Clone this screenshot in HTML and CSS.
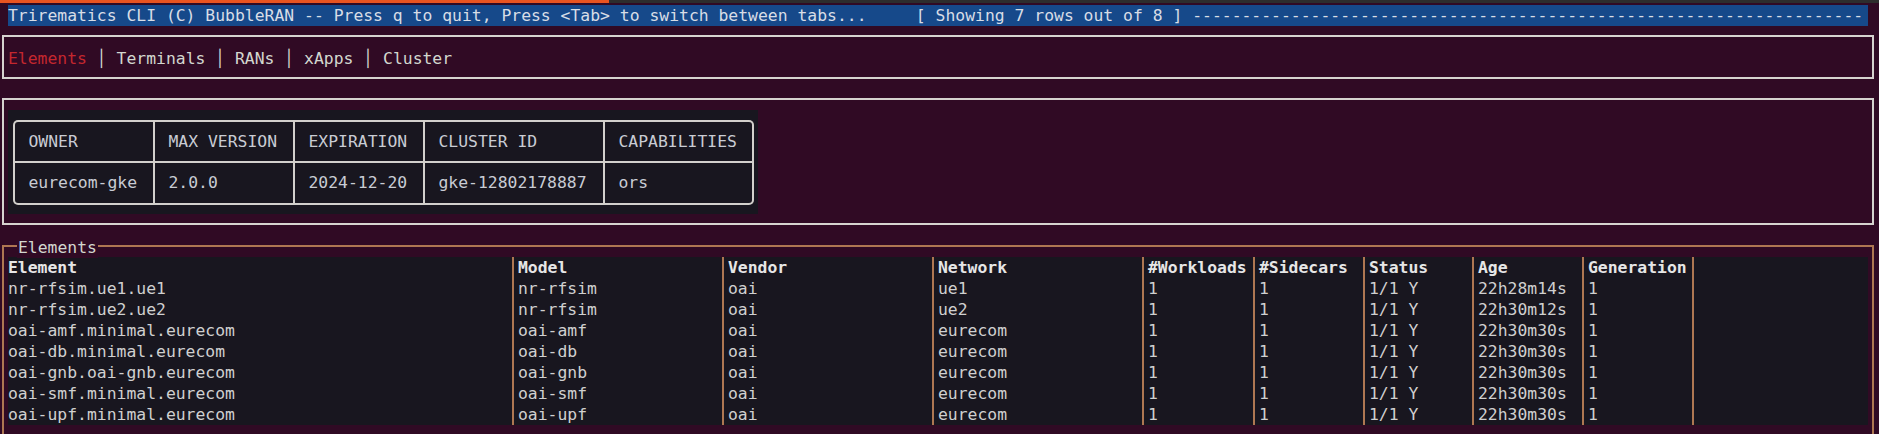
FILE: index.html
```html
<!DOCTYPE html>
<html>
<head>
<meta charset="utf-8">
<link rel="stylesheet" href="styles.css">
</head>
<body>
<div class="screen">
  <div class="chrome"><div class="chrome-active"></div></div>
  <div class="topbar">Trirematics CLI (C) BubbleRAN -- Press q to quit, Press &lt;Tab&gt; to switch between tabs...     [ Showing 7 rows out of 8 ] --------------------------------------------------------------------</div>

  <div class="box tabs-box">
    <div class="tabs"><span class="tab active">Elements</span> │ <span class="tab">Terminals</span> │ <span class="tab">RANs</span> │ <span class="tab">xApps</span> │ <span class="tab">Cluster</span></div>
  </div>

  <div class="box info-box">
    <div class="info-panel">
      <div class="info-table">
        <div class="ic tl">OWNER</div>
        <div class="ic">MAX VERSION</div>
        <div class="ic">EXPIRATION</div>
        <div class="ic">CLUSTER ID</div>
        <div class="ic tr">CAPABILITIES</div>
        <div class="ic bl">eurecom-gke</div>
        <div class="ic">2.0.0</div>
        <div class="ic">2024-12-20</div>
        <div class="ic">gke-12802178887</div>
        <div class="ic br">ors</div>
      </div>
    </div>
  </div>

  <div class="el-box">
    <span class="box-title">Elements</span>
    <div class="el-table">
      <div class="c h">Element</div><div class="c h">Model</div><div class="c h">Vendor</div><div class="c h">Network</div><div class="c h">#Workloads</div><div class="c h">#Sidecars</div><div class="c h">Status</div><div class="c h">Age</div><div class="c h">Generation</div><div class="c"></div>
      <div class="c">nr-rfsim.ue1.ue1</div><div class="c">nr-rfsim</div><div class="c">oai</div><div class="c">ue1</div><div class="c">1</div><div class="c">1</div><div class="c">1/1 Y</div><div class="c">22h28m14s</div><div class="c">1</div><div class="c"></div>
      <div class="c">nr-rfsim.ue2.ue2</div><div class="c">nr-rfsim</div><div class="c">oai</div><div class="c">ue2</div><div class="c">1</div><div class="c">1</div><div class="c">1/1 Y</div><div class="c">22h30m12s</div><div class="c">1</div><div class="c"></div>
      <div class="c">oai-amf.minimal.eurecom</div><div class="c">oai-amf</div><div class="c">oai</div><div class="c">eurecom</div><div class="c">1</div><div class="c">1</div><div class="c">1/1 Y</div><div class="c">22h30m30s</div><div class="c">1</div><div class="c"></div>
      <div class="c">oai-db.minimal.eurecom</div><div class="c">oai-db</div><div class="c">oai</div><div class="c">eurecom</div><div class="c">1</div><div class="c">1</div><div class="c">1/1 Y</div><div class="c">22h30m30s</div><div class="c">1</div><div class="c"></div>
      <div class="c">oai-gnb.oai-gnb.eurecom</div><div class="c">oai-gnb</div><div class="c">oai</div><div class="c">eurecom</div><div class="c">1</div><div class="c">1</div><div class="c">1/1 Y</div><div class="c">22h30m30s</div><div class="c">1</div><div class="c"></div>
      <div class="c">oai-smf.minimal.eurecom</div><div class="c">oai-smf</div><div class="c">oai</div><div class="c">eurecom</div><div class="c">1</div><div class="c">1</div><div class="c">1/1 Y</div><div class="c">22h30m30s</div><div class="c">1</div><div class="c"></div>
      <div class="c">oai-upf.minimal.eurecom</div><div class="c">oai-upf</div><div class="c">oai</div><div class="c">eurecom</div><div class="c">1</div><div class="c">1</div><div class="c">1/1 Y</div><div class="c">22h30m30s</div><div class="c">1</div><div class="c"></div>
    </div>
  </div>
</div>
</body>
</html>
```

FILE: styles.css
```css
* { box-sizing: border-box; }

body {
  margin: 0;
  background: #300a24;
  font-family: "DejaVu Sans Mono", "Liberation Mono", monospace;
  font-size: 16.4px;
  color: #d3d7cf;
}

.screen {
  width: 1879px;
  height: 434px;
  overflow: hidden;
}

.chrome {
  display: flex;
  height: 3px;
  margin-bottom: 2px;
  background: #2d2d2d;
}

.chrome-active {
  width: 609px;
  background: #e95420;
}

.topbar {
  margin-left: 8px;
  width: 1860px;
  height: 21px;
  line-height: 21px;
  background: #16498a;
  color: #d8dde6;
  white-space: pre;
  overflow: hidden;
}

.box {
  margin-left: 2px;
  width: 1872px;
  border: 2px solid #d6d3cf;
}

.tabs-box {
  margin-top: 9px;
  height: 44px;
  padding: 10.5px 0 0 4px;
}

.tabs {
  line-height: 21px;
  white-space: pre;
  color: #d3d7cf;
}

.tab.active { color: #c4272e; }

.info-box {
  margin-top: 19px;
  height: 127px;
  padding: 10px 0 0 4px;
}

.info-panel {
  width: 750px;
  height: 104px;
  background: #18161f;
  padding: 9.5px 0 0 4.5px;
}

.info-table {
  display: grid;
  grid-template-columns: 138px 138px 128px 178px 147px;
  grid-template-rows: 39px 40px;
  gap: 2px;
  padding: 2px;
  width: max-content;
  background: #d2d0cc;
  border-radius: 5px;
}

.ic {
  display: flex;
  align-items: center;
  padding-left: 14px;
  background: #18161f;
  color: #c9ccd4;
  white-space: pre;
}

.ic.tl { border-top-left-radius: 3px; }
.ic.tr { border-top-right-radius: 3px; }
.ic.bl { border-bottom-left-radius: 3px; }
.ic.br { border-bottom-right-radius: 3px; }

.el-box {
  position: relative;
  margin: 20px 0 0 2px;
  width: 1872px;
  height: 300px;
  border: 2px solid #ae7752;
  padding: 9.5px 4px 0 4px;
}

.box-title {
  position: absolute;
  top: -10.5px;
  left: 13px;
  padding: 0 1px;
  line-height: 21px;
  background: #300a24;
  color: #d3d7cf;
}

.el-table {
  display: grid;
  grid-template-columns: 504px 210px 210px 210px 111px 110px 109px 110px 110px 176px;
  grid-auto-rows: 21px;
  background: #18161f;
}

.c {
  line-height: 21px;
  padding-left: 4px;
  border-left: 2px solid #ae7752;
  white-space: pre;
  overflow: hidden;
  color: #d0d0d0;
}

.c:nth-child(10n+1) {
  border-left: none;
  padding-left: 0;
}

.c.h {
  font-weight: bold;
  color: #e6e6e6;
}
```
